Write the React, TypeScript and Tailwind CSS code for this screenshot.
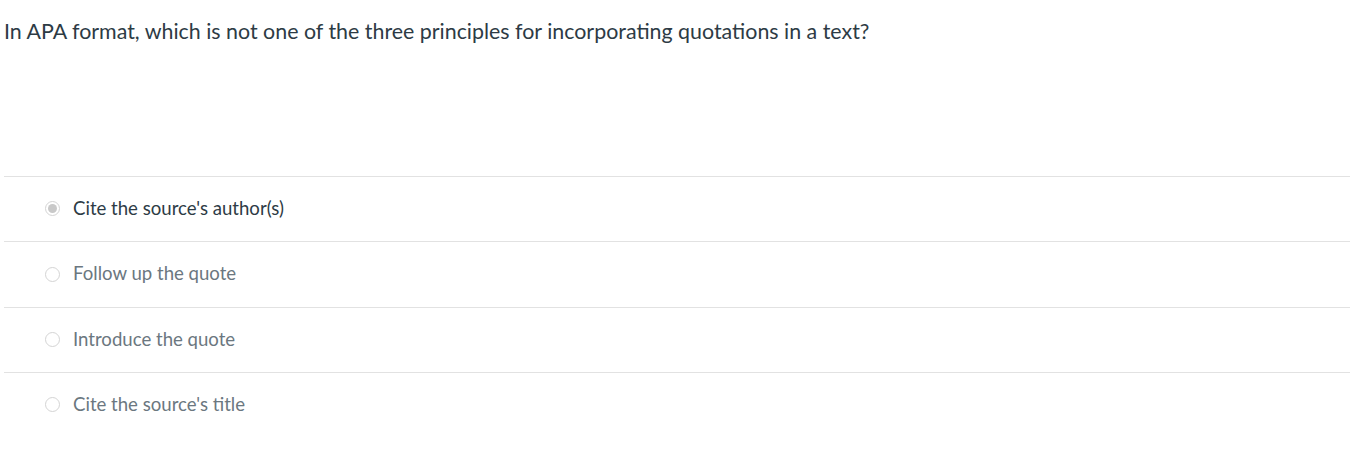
import React from 'react'

const answers = [
  { text: "Cite the source's author(s)", selected: true },
  { text: 'Follow up the quote', selected: false },
  { text: 'Introduce the quote', selected: false },
  { text: "Cite the source's title", selected: false },
]

const Radio: React.FC<{ selected: boolean }> = ({ selected }) => (
  <span className="flex h-[15px] w-[15px] shrink-0 items-center justify-center rounded-full border border-[#d4d4d4] bg-white">
    {selected && <span className="h-[9px] w-[9px] rounded-full bg-[#c9c9c9]" />}
  </span>
)

export default function App() {
  return (
    <div className="min-h-[461px] bg-white pl-[4px] font-['Lato','Noto_Sans',sans-serif]">
      <div className="pt-[17px] text-[21.4px] leading-[28px] text-[#2d3b45]">
        In APA format, which is not one of the three principles for incorporating quotations in a text?
      </div>

      <div className="mt-[131px]">
        {answers.map((a, i) => (
          <div
            key={i}
            className={`flex items-center gap-[13px] border-t border-[#e2e2e2] pb-[1px] pl-[41px] ${i === 1 ? 'h-[66px]' : 'h-[65px]'}`}
          >
            <Radio selected={a.selected} />
            <span className={`text-[18.6px] ${a.selected ? 'text-[#2d3b45]' : 'text-[#6b7780]'}`}>{a.text}</span>
          </div>
        ))}
      </div>
    </div>
  )
}
